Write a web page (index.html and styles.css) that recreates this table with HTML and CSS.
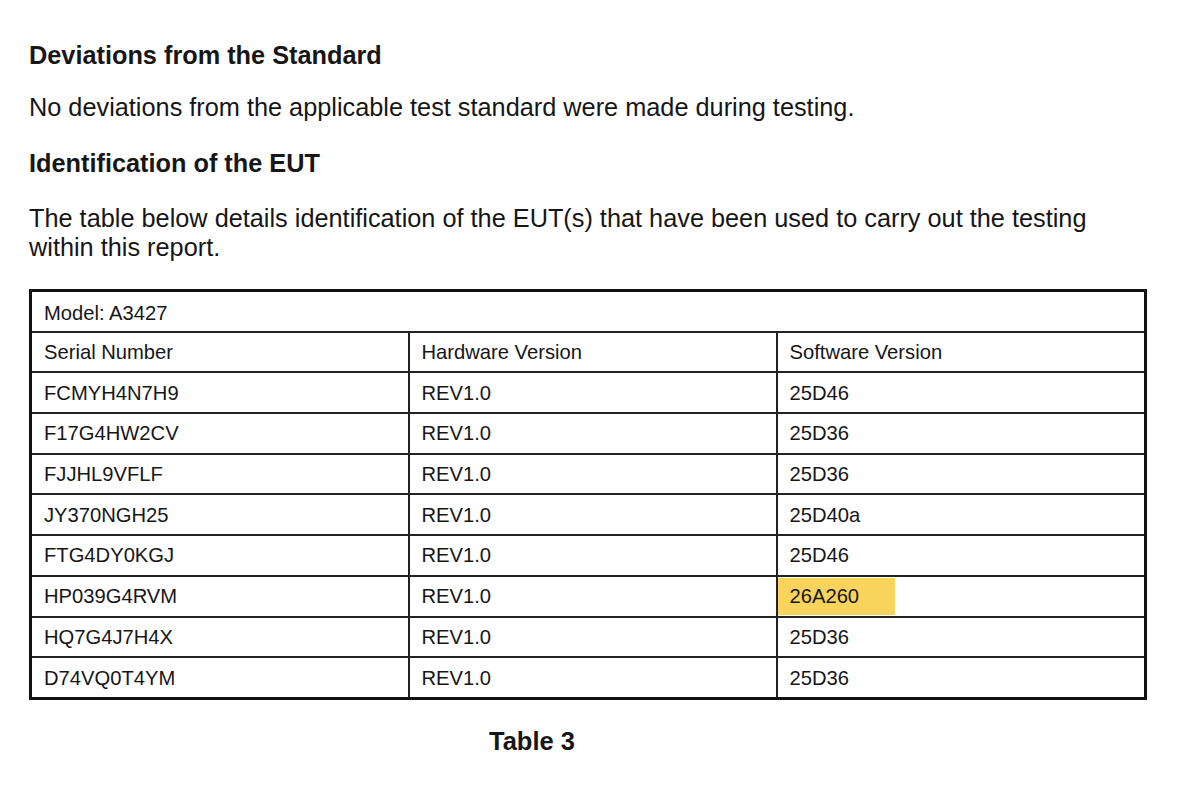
FILE: index.html
```html
<!DOCTYPE html>
<html>
<head>
<meta charset="utf-8">
<link rel="stylesheet" href="styles.css">
</head>
<body>
<div class="page">
  <h2 class="heading h1">Deviations from the Standard</h2>
  <p class="text p1">No deviations from the applicable test standard were made during testing.</p>
  <h2 class="heading h2">Identification of the EUT</h2>
  <p class="text p2">The table below details identification of the EUT(s) that have been used to carry out the testing<br>within this report.</p>
  <table class="eut">
    <colgroup><col class="c1"><col class="c2"><col class="c3"></colgroup>
    <tr><td colspan="3" class="model">Model: A3427</td></tr>
    <tr><td>Serial Number</td><td>Hardware Version</td><td>Software Version</td></tr>
    <tr><td>FCMYH4N7H9</td><td>REV1.0</td><td>25D46</td></tr>
    <tr><td>F17G4HW2CV</td><td>REV1.0</td><td>25D36</td></tr>
    <tr><td>FJJHL9VFLF</td><td>REV1.0</td><td>25D36</td></tr>
    <tr><td>JY370NGH25</td><td>REV1.0</td><td>25D40a</td></tr>
    <tr><td>FTG4DY0KGJ</td><td>REV1.0</td><td>25D46</td></tr>
    <tr><td>HP039G4RVM</td><td>REV1.0</td><td class="hl-cell"><span class="hl">26A260</span></td></tr>
    <tr><td>HQ7G4J7H4X</td><td>REV1.0</td><td>25D36</td></tr>
    <tr><td>D74VQ0T4YM</td><td>REV1.0</td><td>25D36</td></tr>
  </table>
  <div class="caption">Table 3</div>
</div>
</body>
</html>
```

FILE: styles.css
```css
html, body {
  margin: 0;
  padding: 0;
  background: #fff;
}
body {
  font-family: "Liberation Sans", Arial, sans-serif;
  color: #161616;
}
.page {
  width: 1200px;
  height: 808px;
  padding: 0 0 0 29px;
  box-sizing: border-box;
}
.heading {
  font-size: 25.3px;
  font-weight: bold;
  margin: 0;
  line-height: 29px;
}
.h1 { padding-top: 41px; }
.text {
  font-size: 25.3px;
  margin: 0;
  line-height: 29px;
}
.p1 { margin-top: 23px; }
.h2 { margin-top: 27px; }
.p2 { margin-top: 26px; }
.eut {
  margin-top: 27px;
  width: 1118px;
  border-collapse: collapse;
  border: 3px solid #111;
  table-layout: fixed;
  font-size: 20.2px;
}
.c1 { width: 378px; }
.c2 { width: 368px; }
.eut td {
  border: 2px solid #222;
  height: 38.7px;
  padding: 0 0 0 12px;
  vertical-align: middle;
  line-height: 24px;
}
.eut td.model {
  height: 35.7px;
  padding-top: 3px;
}
.eut td.hl-cell { padding: 0; }
.hl {
  display: block;
  width: 117px;
  height: 37px;
  line-height: 37px;
  padding-left: 12px;
  box-sizing: border-box;
  background: #f8d45c;
}
.caption {
  width: 1006px;
  text-align: center;
  font-size: 25.5px;
  font-weight: bold;
  margin-top: 27px;
}
```
